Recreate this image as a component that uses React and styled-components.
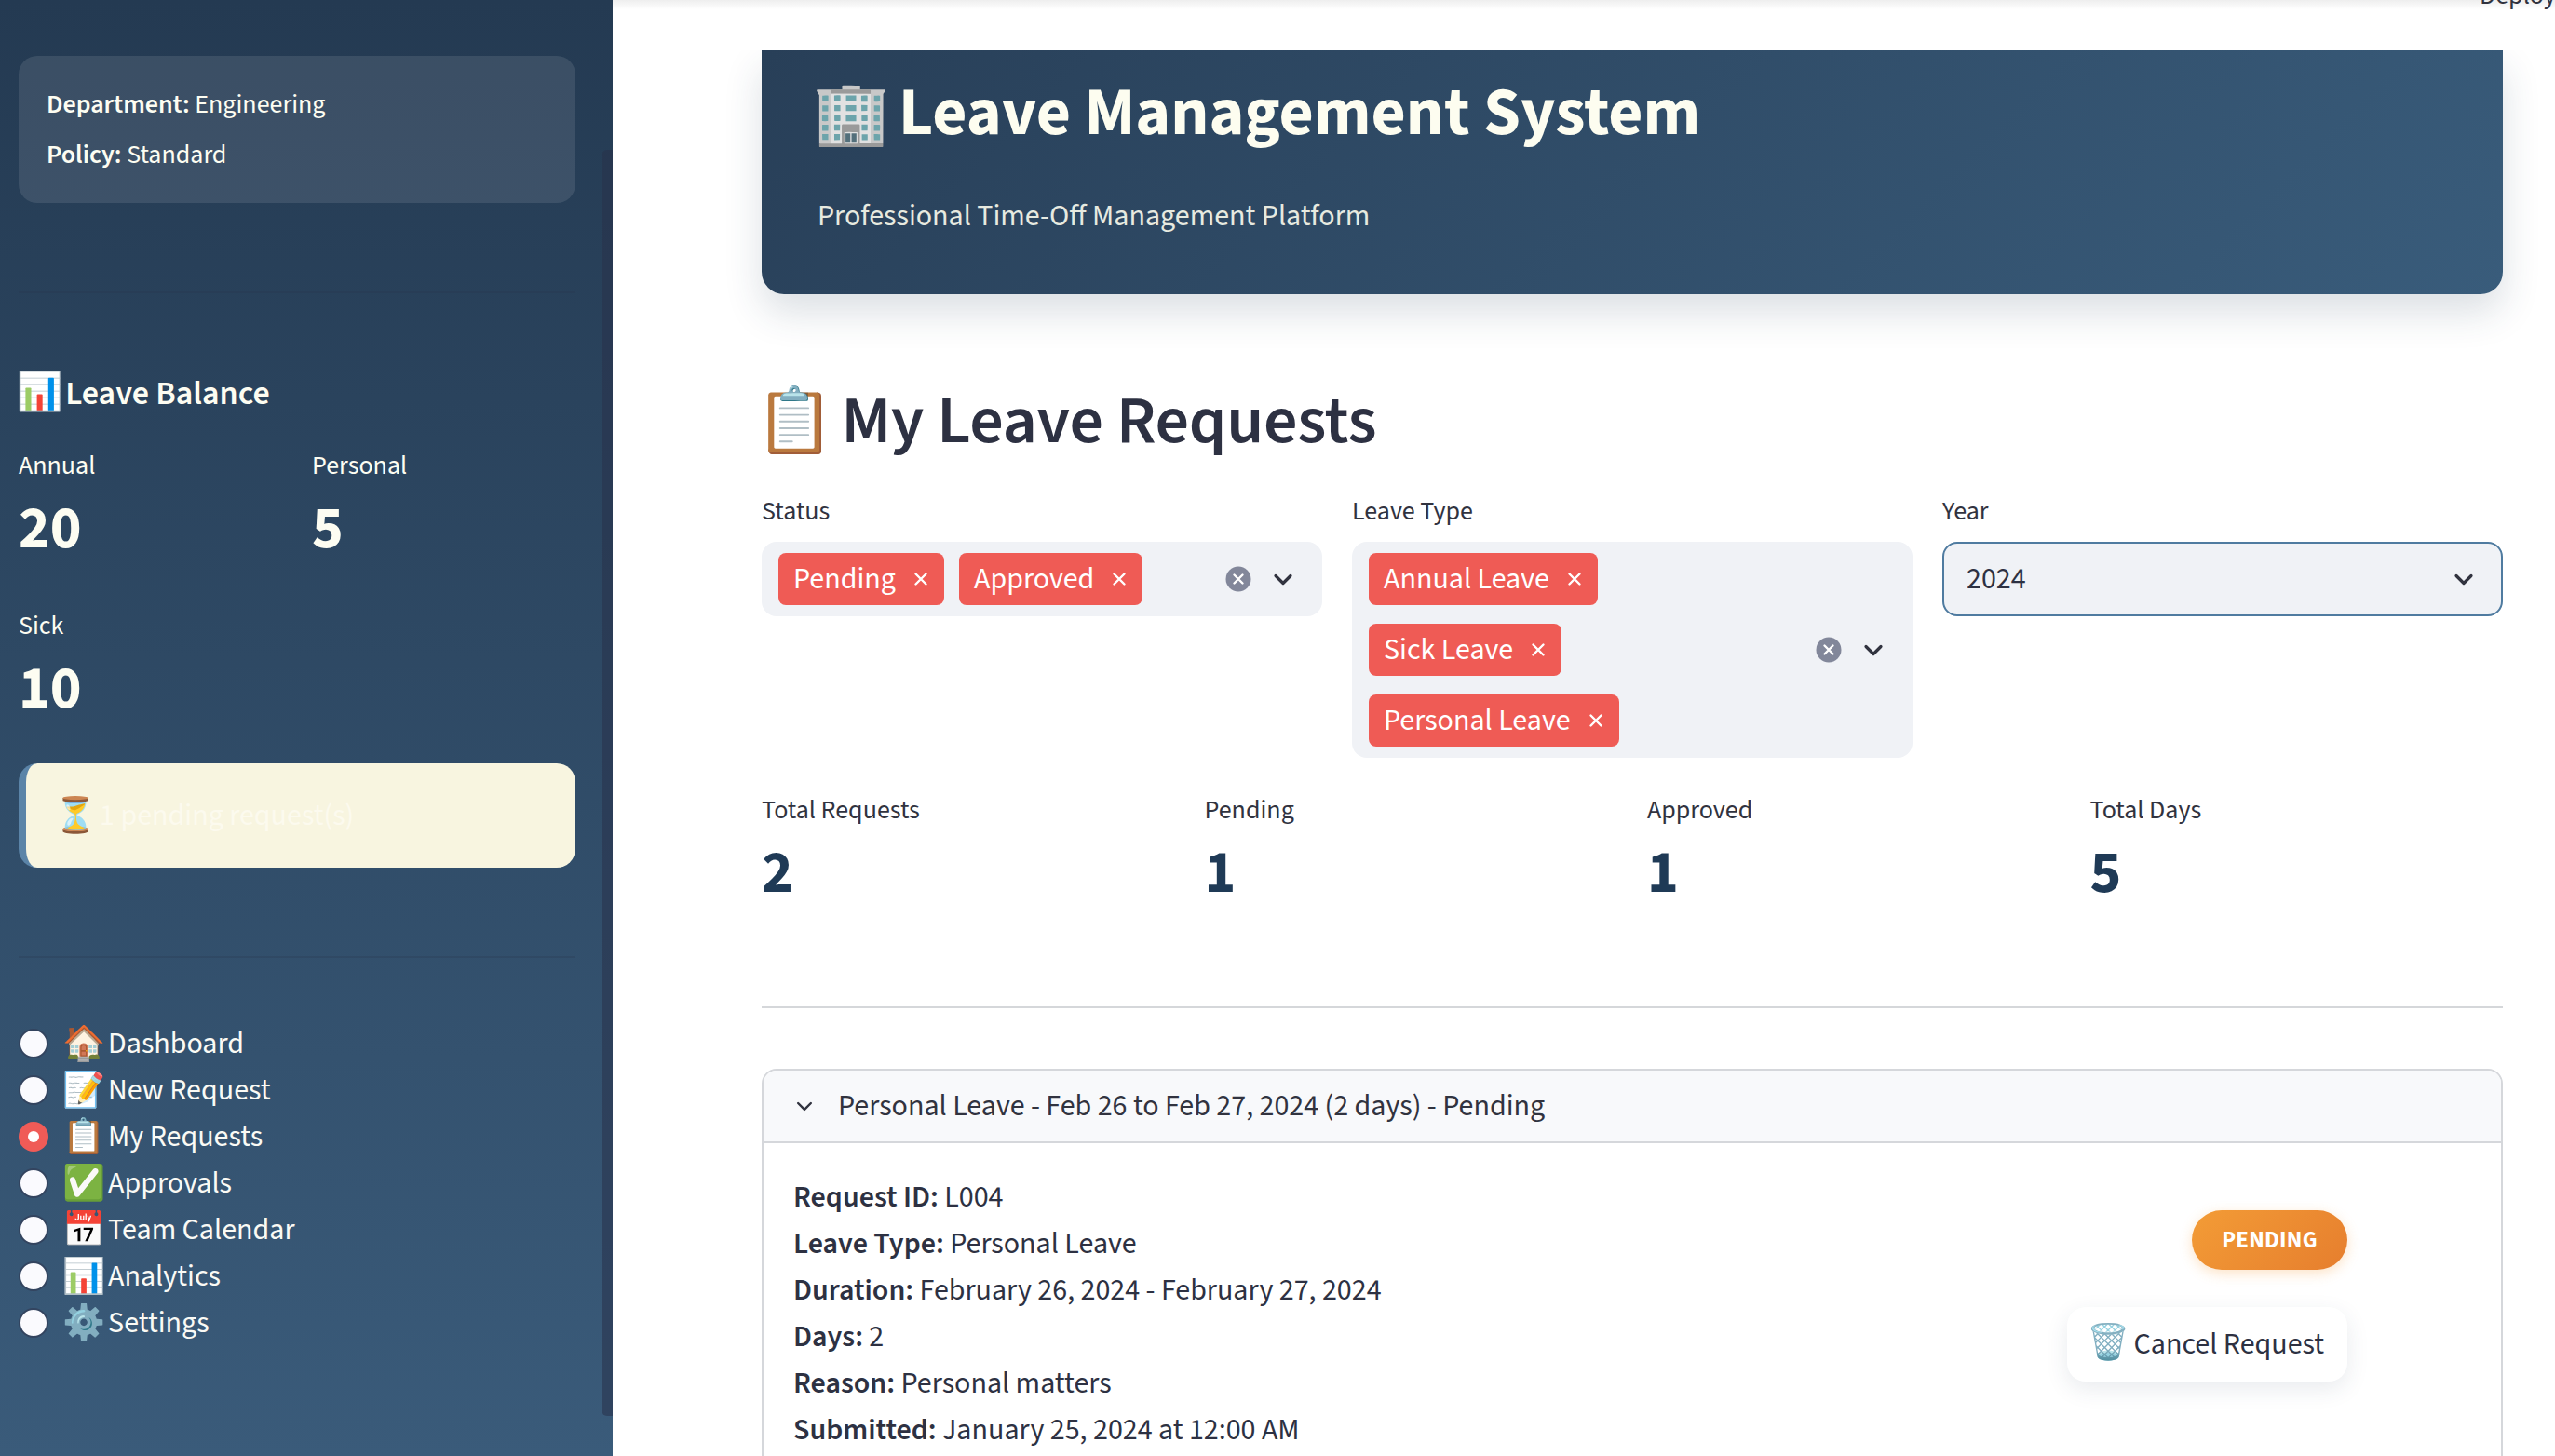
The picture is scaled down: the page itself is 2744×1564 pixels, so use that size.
import React from "react";
import styled, { createGlobalStyle } from "styled-components";

const GlobalStyle = createGlobalStyle`
  html, body { margin: 0; padding: 0; background: #fff; }
  body { font-family: "Source Sans 3", "Noto Sans", "Noto Color Emoji", sans-serif; color: #2d3142; }
  * { box-sizing: border-box; }
`;

const Page = styled.div`
  display: flex;
  width: 2744px;
  height: 1564px;
  overflow: hidden;
  position: relative;
`;

/* an emoji drawn a little larger or smaller than its line, keeping the text after it in place */
const Emoji = styled.span`
  font-size: ${(p) => p.$scale}em;
  line-height: 1;
  margin: 0 ${(p) => p.$right ?? -0.08}em 0 ${(p) => p.$left ?? -0.08}em;
`;

/* ---------- sidebar ---------- */
const Sidebar = styled.aside`
  position: relative;
  flex: 0 0 658px;
  height: 1564px;
  padding: 60px 40px 0 20px;
  background: linear-gradient(180deg, #243a52 0%, #3a5b7a 100%);
  color: #fdfdf2;
`;
const SideScroll = styled.div`
  position: absolute;
  top: 161px;
  right: 0;
  width: 12px;
  height: 1360px;
  border-radius: 6px 0 0 6px;
  background: rgba(40, 50, 75, 0.55);
`;
const InfoCard = styled.div`
  height: 158px;
  padding: 0 30px;
  display: flex;
  flex-direction: column;
  justify-content: center;
  background: rgba(255, 255, 255, 0.1);
  border-radius: 20px;
  font-size: 28px;
  line-height: 54px;
`;
const InfoLine = styled.div`
  b { font-weight: 600; }
`;
const SideRule = styled.hr`
  margin: ${(p) => p.$top}px 0 0;
  border: 0;
  height: 2px;
  background: rgba(40, 50, 75, 0.25);
`;
const SideHeading = styled.h3`
  margin: 78px 0 0;
  font-size: 36px;
  line-height: 60px;
  font-weight: 600;
`;
const BalanceGrid = styled.div`
  margin-top: 25px;
  display: grid;
  grid-template-columns: 299px 283px;
  column-gap: 16px;
  row-gap: 42px;
`;
const BalanceLabel = styled.div`
  font-size: 28px;
  line-height: 44px;
`;
const BalanceValue = styled.div`
  margin-top: 6px;
  font-size: 64px;
  line-height: 80px;
  font-weight: 700;
`;
const Warning = styled.div`
  margin-top: 40px;
  height: 112px;
  display: flex;
  align-items: center;
  padding-left: 36px;
  background: #f8f5e0;
  border-left: 8px solid #5b84a8;
  border-radius: 20px;
  font-size: 32px;
  color: #fcfaee;
`;
const WarningIcon = styled.span`
  margin: 0 3px 0 -6px;
  font-size: 37px;
  line-height: 1;
`;
const Nav = styled.nav`
  margin-top: 67px;
  display: flex;
  flex-direction: column;
`;
const NavItem = styled.div`
  height: 50px;
  display: flex;
  align-items: center;
  font-size: 32px;
  color: #fafaf5;
`;
const Radio = styled.span`
  flex: none;
  width: 32px;
  height: 32px;
  margin-right: 16px;
  border-radius: 50%;
  display: flex;
  align-items: center;
  justify-content: center;
  background: ${(p) => (p.$on ? "#f05b57" : "#fafafe")};
  border: ${(p) => (p.$on ? "0" : "2px solid #33445f")};
  &::after {
    content: "";
    display: ${(p) => (p.$on ? "block" : "none")};
    width: 12px;
    height: 12px;
    border-radius: 50%;
    background: #fff;
  }
`;
const NavEmoji = styled.span`
  margin: 0 3px 0 -1px;
  font-size: 37px;
  line-height: 1;
`;

/* ---------- main ---------- */
const Main = styled.main`
  flex: 1;
  min-width: 0;
  height: 1564px;
  padding: 54px 56px 0 160px;
  overflow: hidden;
`;
const TopBar = styled.header`
  position: absolute;
  z-index: 2;
  top: 0;
  left: 658px;
  right: 0;
  height: 54px;
  display: flex;
  justify-content: flex-end;
  overflow: hidden;
  background: linear-gradient(180deg, #eeeeee 0, #ffffff 10px);
`;
const Deploy = styled.span`
  margin: -27px 0 0;
  width: 81px;
  height: 44px;
  font-size: 28px;
  line-height: 44px;
  white-space: nowrap;
  color: #31333f;
`;
const Hero = styled.section`
  height: 262px;
  padding: 23px 60px 0;
  border-radius: 0 0 24px 24px;
  background: linear-gradient(135deg, #283f58 0%, #395c7b 100%);
  box-shadow: 0 20px 40px rgba(40, 60, 85, 0.16);
`;
const HeroTitle = styled.h1`
  margin: 0;
  font-size: 72px;
  line-height: 90px;
  font-weight: 700;
  color: #fdfdf0;
`;
const HeroSub = styled.p`
  margin: 40px 0 0;
  font-size: 32px;
  line-height: 50px;
  color: #e7eae0;
`;
const PageHeading = styled.h2`
  margin: 92px 0 0;
  font-size: 72px;
  line-height: 90px;
  font-weight: 600;
  letter-spacing: -0.25px;
  color: #2d3142;
`;
const Filters = styled.div`
  margin-top: 29px;
  display: grid;
  grid-template-columns: repeat(3, 602px);
  column-gap: 32px;
  align-items: start;
`;
const FieldLabel = styled.div`
  margin-bottom: 11px;
  font-size: 28px;
  line-height: 44px;
  color: #31333f;
`;
const MultiBox = styled.div`
  display: flex;
  align-items: center;
  padding: 12px 28px 12px 18px;
  background: #f0f2f6;
  border-radius: 16px;
`;
const TagList = styled.div`
  flex: 1;
  display: flex;
  flex-direction: ${(p) => (p.$stack ? "column" : "row")};
  align-items: flex-start;
  gap: ${(p) => (p.$stack ? "20px" : "16px")};
`;
const Tag = styled.span`
  height: 56px;
  padding: 0 16px 0 16px;
  display: inline-flex;
  align-items: center;
  gap: 18px;
  border-radius: 8px;
  background: #ef5b55;
  color: #fff;
  font-size: 32px;
`;
const BoxIcons = styled.div`
  display: flex;
  align-items: center;
  gap: 20px;
`;
const SelectBox = styled.div`
  height: 80px;
  padding: 0 26px 0 24px;
  display: flex;
  align-items: center;
  justify-content: space-between;
  background: #f0f2f6;
  border: 2px solid #4f7ba0;
  border-radius: 16px;
  font-size: 32px;
  color: #2d3142;
`;
const Metrics = styled.div`
  margin-top: 34px;
  display: grid;
  grid-template-columns: repeat(4, 1fr);
  column-gap: 32px;
`;
const MetricLabel = styled.div`
  font-size: 28px;
  line-height: 44px;
  color: #31333f;
`;
const MetricValue = styled.div`
  margin-top: 6px;
  font-size: 64px;
  line-height: 80px;
  font-weight: 700;
  color: #1f3a56;
`;
const Rule = styled.hr`
  margin: 103px 0 0;
  border: 0;
  height: 2px;
  background: #d5d7da;
`;
const Expander = styled.section`
  margin-top: 65px;
  border: 2px solid #d5d7db;
  border-radius: 16px;
  height: 600px;
`;
const ExpanderHead = styled.div`
  height: 78px;
  padding: 0 32px;
  display: flex;
  align-items: center;
  gap: 24px;
  background: #f8f9fb;
  border-bottom: 2px solid #d5d7db;
  border-radius: 14px 14px 0 0;
  font-size: 32px;
  color: #31333f;
`;
const ExpanderBody = styled.div`
  padding: 33px 165px 0 32px;
  display: grid;
  grid-template-columns: 1fr auto;
`;
const Details = styled.div`
  font-size: 32px;
  line-height: 50px;
  color: #2d3142;
  b { font-weight: 600; }
`;
const Actions = styled.div`
  padding-top: 39px;
  display: flex;
  flex-direction: column;
  align-items: flex-end;
  gap: 40px;
`;
const Badge = styled.span`
  width: 167px;
  height: 64px;
  display: flex;
  align-items: center;
  justify-content: center;
  border-radius: 32px;
  background: linear-gradient(135deg, #f39c36 0%, #e67e2e 100%);
  box-shadow: 0 4px 14px rgba(243, 156, 54, 0.28);
  color: #fff;
  font-size: 25px;
  font-weight: 700;
  letter-spacing: 0.2px;
`;
const CancelButton = styled.button`
  width: 301px;
  height: 80px;
  padding: 0;
  border: 0;
  border-radius: 20px;
  background: #fff;
  box-shadow: 0 8px 24px rgba(40, 60, 85, 0.1);
  font: inherit;
  font-size: 32px;
  color: #2d3142;
`;

const Chevron = ({ size = 28, color = "#31333f", sw = 3.2 }) => (
  <svg width={size} height={size} viewBox="0 0 28 28" fill="none" stroke={color} strokeWidth={sw} strokeLinecap="round" strokeLinejoin="round">
    <path d="M6 10.5 14 18.5 22 10.5" />
  </svg>
);
const Cross = () => (
  <svg width="18" height="18" viewBox="0 0 18 18" fill="none" stroke="#fff" strokeWidth="2.4" strokeLinecap="round">
    <path d="M3.5 3.5 14.5 14.5M14.5 3.5 3.5 14.5" />
  </svg>
);
const ClearIcon = () => (
  <svg width="28" height="28" viewBox="0 0 28 28">
    <circle cx="14" cy="14" r="13.5" fill="#82879a" />
    <path d="M9.5 9.5 18.5 18.5M18.5 9.5 9.5 18.5" stroke="#fff" strokeWidth="2.4" strokeLinecap="round" />
  </svg>
);

const navItems = [
  ["🏠", "Dashboard"],
  ["📝", "New Request"],
  ["📋", "My Requests", true],
  ["✅", "Approvals"],
  ["📅", "Team Calendar"],
  ["📊", "Analytics"],
  ["⚙️", "Settings"],
];
const details = [
  ["Request ID:", "L004"],
  ["Leave Type:", "Personal Leave"],
  ["Duration:", "February 26, 2024 - February 27, 2024"],
  ["Days:", "2"],
  ["Reason:", "Personal matters"],
  ["Submitted:", "January 25, 2024 at 12:00 AM"],
];
const metrics = [
  ["Total Requests", "2"],
  ["Pending", "1"],
  ["Approved", "1"],
  ["Total Days", "5"],
];

const TagItem = ({ children }) => (
  <Tag>
    {children}
    <Cross />
  </Tag>
);

export default function App() {
  return (
    <Page>
      <GlobalStyle />
      <Sidebar>
        <InfoCard>
          <InfoLine><b>Department:</b> Engineering</InfoLine>
          <InfoLine><b>Policy:</b> Standard</InfoLine>
        </InfoCard>
        <SideRule $top={95} />
        <SideHeading><Emoji $scale={1.1} $left={-0.04} $right={-0.12}>📊</Emoji> Leave Balance</SideHeading>
        <BalanceGrid>
          <div>
            <BalanceLabel>Annual</BalanceLabel>
            <BalanceValue>20</BalanceValue>
          </div>
          <div>
            <BalanceLabel>Personal</BalanceLabel>
            <BalanceValue>5</BalanceValue>
          </div>
          <div>
            <BalanceLabel>Sick</BalanceLabel>
            <BalanceValue>10</BalanceValue>
          </div>
        </BalanceGrid>
        <Warning>
          <WarningIcon>⏳</WarningIcon>1 pending request(s)
        </Warning>
        <SideRule $top={95} />
        <Nav>
          {navItems.map(([icon, label, on]) => (
            <NavItem key={label}>
              <Radio $on={on} />
              <NavEmoji>{icon}</NavEmoji>
              {label}
            </NavItem>
          ))}
        </Nav>
        <SideScroll />
      </Sidebar>
      <TopBar>
        <Deploy>Deploy</Deploy>
      </TopBar>
      <Main>
        <Hero>
          <HeroTitle><Emoji $scale={0.92} $left={-0.07} $right={-0.08}>🏢</Emoji> Leave Management System</HeroTitle>
          <HeroSub>Professional Time-Off Management Platform</HeroSub>
        </Hero>
        <PageHeading><Emoji $scale={0.95} $left={-0.09} $right={-0.11}>📋</Emoji> My Leave Requests</PageHeading>
        <Filters>
          <div>
            <FieldLabel>Status</FieldLabel>
            <MultiBox>
              <TagList>
                <TagItem>Pending</TagItem>
                <TagItem>Approved</TagItem>
              </TagList>
              <BoxIcons>
                <ClearIcon />
                <Chevron />
              </BoxIcons>
            </MultiBox>
          </div>
          <div>
            <FieldLabel>Leave Type</FieldLabel>
            <MultiBox>
              <TagList $stack>
                <TagItem>Annual Leave</TagItem>
                <TagItem>Sick Leave</TagItem>
                <TagItem>Personal Leave</TagItem>
              </TagList>
              <BoxIcons>
                <ClearIcon />
                <Chevron />
              </BoxIcons>
            </MultiBox>
          </div>
          <div>
            <FieldLabel>Year</FieldLabel>
            <SelectBox>
              2024
              <Chevron />
            </SelectBox>
          </div>
        </Filters>
        <Metrics>
          {metrics.map(([label, value]) => (
            <div key={label}>
              <MetricLabel>{label}</MetricLabel>
              <MetricValue>{value}</MetricValue>
            </div>
          ))}
        </Metrics>
        <Rule />
        <Expander>
          <ExpanderHead>
            <Chevron size={24} sw={2.8} />
            Personal Leave - Feb 26 to Feb 27, 2024 (2 days) - Pending
          </ExpanderHead>
          <ExpanderBody>
            <Details>
              {details.map(([k, v]) => (
                <div key={k}><b>{k}</b> {v}</div>
              ))}
            </Details>
            <Actions>
              <Badge>PENDING</Badge>
              <CancelButton><Emoji $scale={1.16} $left={-0.1} $right={-0.06}>🗑️</Emoji> Cancel Request</CancelButton>
            </Actions>
          </ExpanderBody>
        </Expander>
      </Main>
    </Page>
  );
}
